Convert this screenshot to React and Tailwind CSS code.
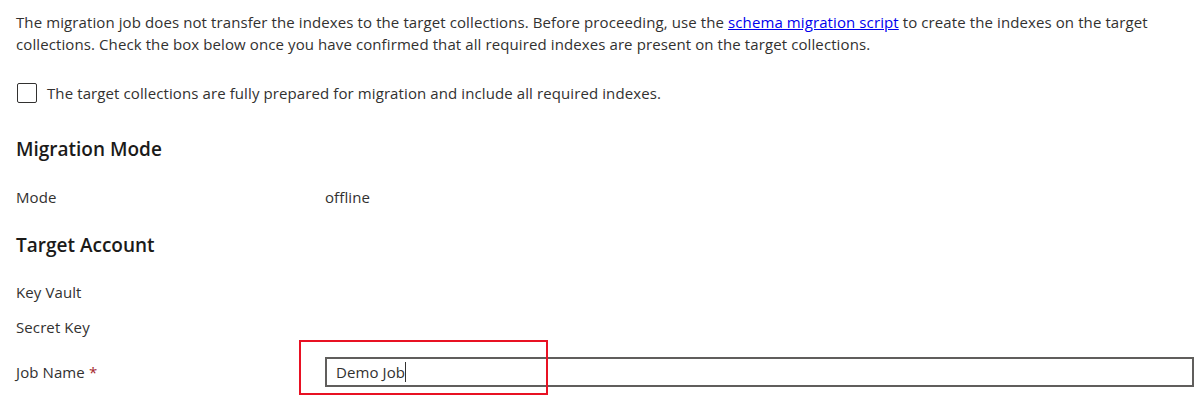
import React from 'react';

function Row({ label, required, children, className = '' }) {
  return (
    <div className={`flex items-center ${className}`}>
      <div className="w-[309px] shrink-0">
        {label}
        {required && <span className="text-[#a4262c] ml-1">*</span>}
      </div>
      {children}
    </div>
  );
}

export default function App() {
  return (
    <div
      className="w-[1201px] h-[405px] bg-white text-[#323130] text-[15px] tracking-[0.1px] overflow-hidden"
      style={{ fontFamily: '"Open Sans", "Noto Sans", Arial, sans-serif' }}
    >
      <div className="pl-4 pr-[7px] pt-[11px]">
        <p className="leading-[22px] pr-[17px]">
          The migration job does not transfer the indexes to the target collections. Before proceeding, use the{' '}
          <a href="#" className="text-[#0000ee] underline">schema migration script</a> to create the indexes on the
          target collections. Check the box below once you have confirmed that all required indexes are present on the
          target collections.
        </p>

        <label className="flex items-center mt-[27px] h-[22px]">
          <span className="w-5 h-5 ml-px border border-[#323130] rounded-[2px] bg-white shrink-0" />
          <span className="ml-[10px]">The target collections are fully prepared for migration and include all required indexes.</span>
        </label>

        <h2 className="mt-[33px] text-[19px] font-semibold leading-[24px] tracking-normal text-[#1b1a19]">Migration Mode</h2>

        <Row label="Mode" className="mt-[24px] h-[24px]">
          <span>offline</span>
        </Row>

        <h2 className="mt-[24px] text-[19px] font-semibold leading-[24px] tracking-normal text-[#1b1a19]">Target Account</h2>

        <Row label="Key Vault" className="mt-[23px] h-[24px]" />
        <Row label="Secret Key" className="mt-[11px] h-[24px]" />

        <Row label="Job Name" required className="mt-[17px] h-[32px]">
          <div className="relative flex-1">
            <div className="h-[30px] border-2 border-[#605e5c] flex items-center pl-[9px]">
              <span>Demo Job</span>
              <span className="w-px h-[20px] bg-[#323130]" />
            </div>
            <div className="absolute left-[-26px] top-[-17px] w-[249px] h-[55px] border-2 border-[#e81123]" />
          </div>
        </Row>
      </div>
    </div>
  );
}
